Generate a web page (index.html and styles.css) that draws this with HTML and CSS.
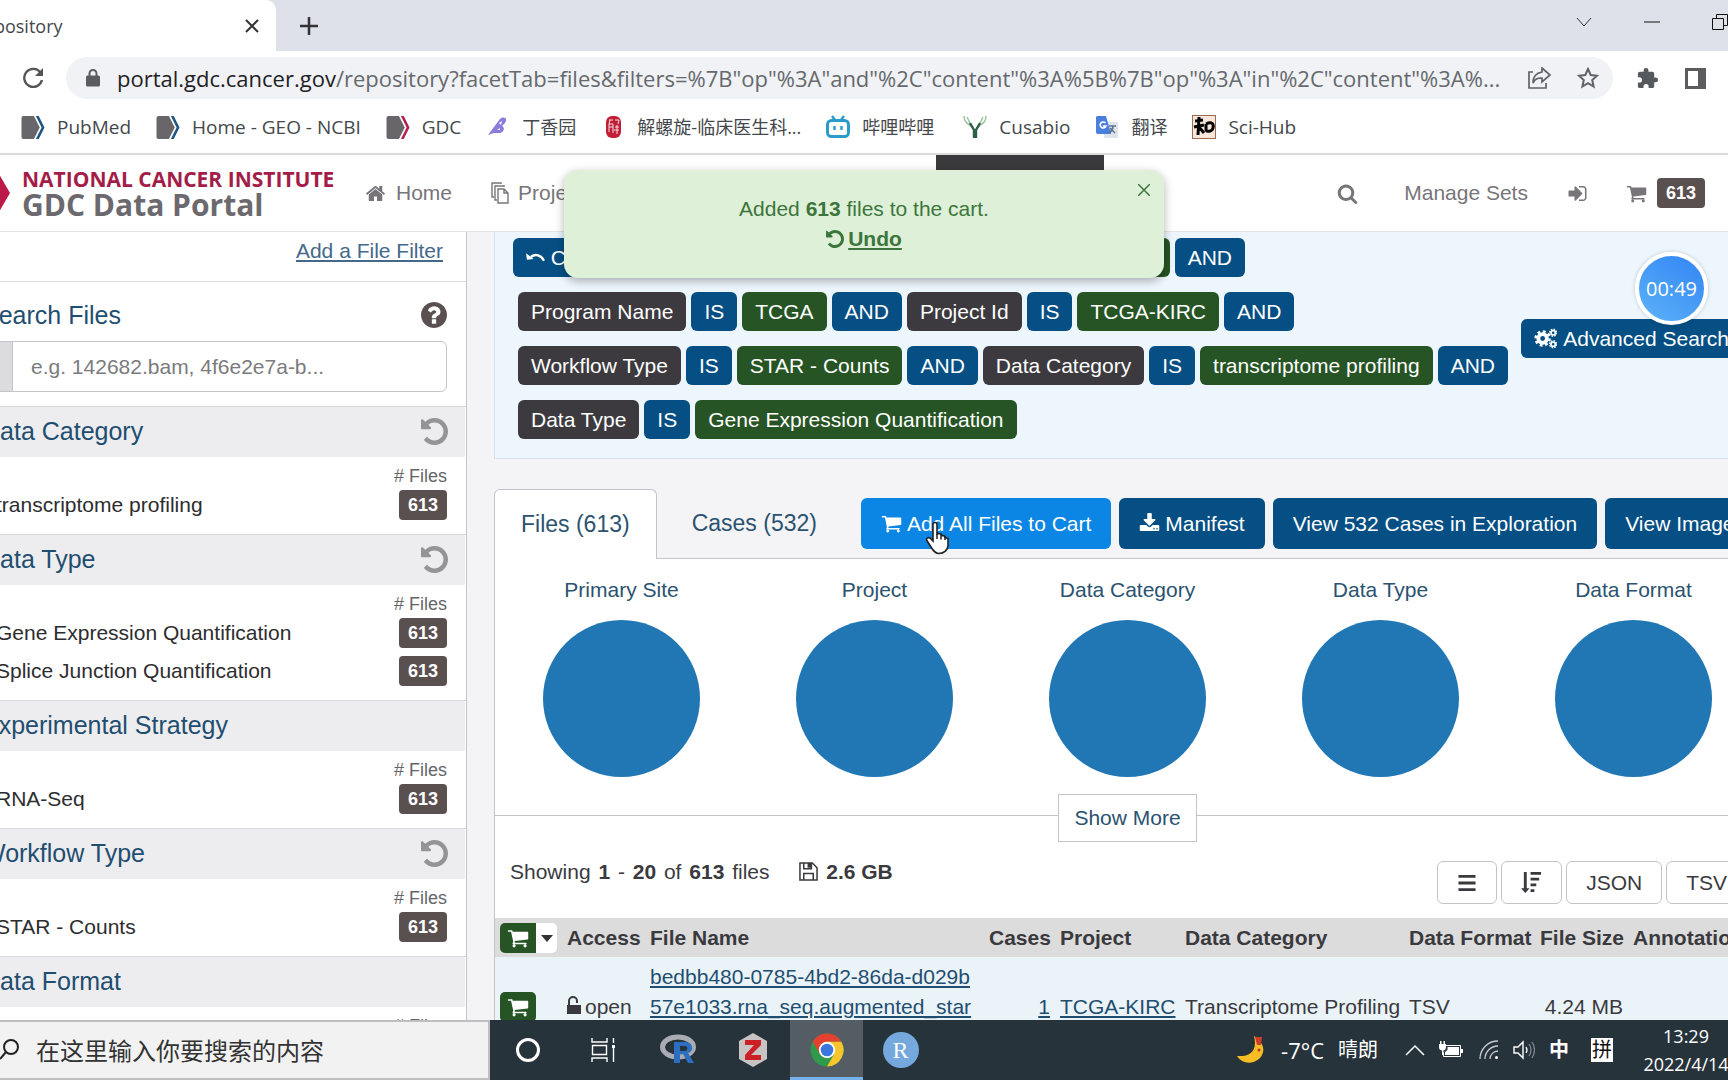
FILE: index.html
```html
<!DOCTYPE html>
<html lang="en">
<head>
<meta charset="utf-8">
<title>Repository</title>
<link rel="stylesheet" href="styles.css">
</head>
<body>
<svg class="sprite" aria-hidden="true">
  <symbol id="i-home" viewBox="0 0 1792 1792"><path d="M1472 992v480q0 26-19 45t-45 19h-384v-384h-256v384h-384q-26 0-45-19t-19-45v-480q0-1 .5-3t.5-3l575-474 575 474q1 2 1 6zm223-69l-62 74q-8 9-21 11h-3q-13 0-21-7l-692-577-692 577q-12 8-24 7-13-2-21-11l-62-74q-8-10-7-23.500t11-21.500l719-599q32-26 76-26t76 26l244 204v-195q0-14 9-23t23-9h192q14 0 23 9t9 23v408l219 182q10 8 11 21.500t-7 23.500z"/></symbol>
  <symbol id="i-cart" viewBox="0 0 1792 1792"><path d="M704 1536q0 52-38 90t-90 38-90-38-38-90 38-90 90-38 90 38 38 90zm896 0q0 52-38 90t-90 38-90-38-38-90 38-90 90-38 90 38 38 90zm128-1088v512q0 24-16.500 42.500t-40.500 21.500l-1044 122q13 60 13 70 0 16-24 64h920q26 0 45 19t19 45-19 45-45 19h-1024q-26 0-45-19t-19-45q0-11 8-31.500t16-36 21.500-40 15.500-29.500l-177-823h-204q-26 0-45-19t-19-45 19-45 45-19h256q16 0 28.500 6.500t19.500 15.500 13 24.500 8 26 5.500 29.500 4.500 26h1201q26 0 45 19t19 45z"/></symbol>
  <symbol id="i-search" viewBox="0 0 1792 1792"><path d="M1216 832q0-185-131.500-316.500t-316.500-131.500-316.500 131.500-131.500 316.500 131.500 316.500 316.500 131.500 316.500-131.500 131.500-316.500zm512 832q0 52-38 90t-90 38q-54 0-90-38l-343-342q-179 124-399 124-143 0-273.500-55.500t-225-150-150-225-55.500-273.500 55.500-273.500 150-225 225-150 273.500-55.500 273.500 55.500 225 150 150 225 55.500 273.500q0 220-124 399l343 343q37 37 37 90z"/></symbol>
  <symbol id="i-help" viewBox="128 128 1536 1536"><path d="M1024 1376v-192q0-14-9-23t-23-9h-192q-14 0-23 9t-9 23v192q0 14 9 23t23 9h192q14 0 23-9t9-23zm256-672q0-88-55.500-163t-138.500-116-170-41q-243 0-371 213-15 24 8 42l132 100q7 6 19 6 16 0 25-12 53-68 86-92 34-24 86-24 48 0 85.500 26t37.500 59q0 38-20 61t-68 45q-63 28-115.500 86.500t-52.500 125.500v36q0 14 9 23t23 9h192q14 0 23-9t9-23q0-19 21.500-49.500t54.500-49.500q32-18 49-28.500t46-35 44.500-48 28-60.500 12.500-81zm384 192q0 209-103 385.500t-279.500 279.500-385.500 103-385.500-103-279.500-279.500-103-385.500 103-385.500 279.500-279.500 385.500-103 385.500 103 279.500 279.500 103 385.500z"/></symbol>
  <symbol id="i-undo" viewBox="128 128 1536 1536"><path d="M1664 896q0 156-61 298t-164 245-245 164-298 61q-172 0-327-72.500t-264-204.500q-7-10-6.500-22.500t8.500-20.500l137-138q10-9 25-9 16 2 23 12 73 95 179 147t225 52q104 0 198.500-40.500t163.500-109.500 109.500-163.500 40.500-198.500-40.500-198.500-109.500-163.500-163.500-109.500-198.500-40.500q-98 0-188 35.500t-160 101.500l137 138q31 30 14 69-17 40-59 40h-448q-26 0-45-19t-19-45v-448q0-42 40-59 39-17 69 14l130 129q107-101 244.500-156.500t284.500-55.500q156 0 298 61t245 164 164 245 61 298z"/></symbol>
  <symbol id="i-signin" viewBox="0 0 1792 1792"><path d="M1312 896q0 26-19 45l-544 544q-19 19-45 19t-45-19-19-45v-288h-448q-26 0-45-19t-19-45v-384q0-26 19-45t45-19h448v-288q0-26 19-45t45-19 45 19l544 544q19 19 19 45zm352-352v704q0 119-84.500 203.500t-203.500 84.500h-320q-13 0-22.500-9.500t-9.500-22.500q0-4-1-20t-.5-26.500 3-23.500 10-19.500 20.500-6.500h320q66 0 113-47t47-113v-704q0-66-47-113t-113-47h-312l-11.500-1-11.500-3-8-5.500-7-9-2-13.500q0-4-1-20t-.5-26.500 3-23.500 10-19.500 20.500-6.500h320q119 0 203.500 84.500t84.500 203.500z"/></symbol>
  <symbol id="i-download" viewBox="0 0 1792 1792"><path d="M1344 1344q0-26-19-45t-45-19-45 19-19 45 19 45 45 19 45-19 19-45zm256 0q0-26-19-45t-45-19-45 19-19 45 19 45 45 19 45-19 19-45zm128-224v320q0 40-28 68t-68 28h-1472q-40 0-68-28t-28-68v-320q0-40 28-68t68-28h465l135 136q58 56 136 56t136-56l136-136h464q40 0 68 28t28 68zm-325-569q17 41-14 70l-448 448q-18 19-45 19t-45-19l-448-448q-31-29-14-70 17-39 59-39h256v-448q0-26 19-45t45-19h256q26 0 45 19t19 45v448h256q42 0 59 39z"/></symbol>
  <symbol id="i-copy" viewBox="0 0 18 22"><path d="M3 15H1V1h9v1M6 18H4V4h9v1M7 7h6l4 4v10H7zM13 7v4h4" fill="none" stroke="currentColor" stroke-width="1.400"/></symbol>
  <symbol id="i-gears" viewBox="0 0 24 24"><circle cx="9" cy="12" r="4.500" fill="none" stroke="currentColor" stroke-width="4"/><circle cx="9" cy="12" r="7.300" fill="none" stroke="currentColor" stroke-width="2.600" stroke-dasharray="3 2.730"/><g fill="none" stroke="currentColor"><circle cx="20" cy="6" r="2.300" stroke-width="1.800"/><circle cx="20" cy="6" r="3.700" stroke-width="1.400" stroke-dasharray="1.600 1.300"/><circle cx="20" cy="18" r="2.300" stroke-width="1.800"/><circle cx="20" cy="18" r="3.700" stroke-width="1.400" stroke-dasharray="1.600 1.300"/></g></symbol>
  <symbol id="i-floppy" viewBox="0 0 20 20"><path d="M1 1h13l5 5v13H1zM5 19v-7h10v7M5 1v6h8V1" fill="none" stroke="currentColor" stroke-width="1.600"/><path d="M9 1h4v5H9z"/></symbol>
  <symbol id="i-list" viewBox="0 0 20 20"><path d="M1 2h18v3H1zM1 9h18v3H1zM1 16h18v3H1z"/></symbol>
  <symbol id="i-sort" viewBox="0 0 22 24"><path d="M3 1h3v17h3l-4.500 5L0 18h3zM10 1h11v3H10zM10 7h9v3h-9zM10 13h6v3h-6zM10 19h4v3h-4z"/></symbol>
  <symbol id="i-unlock" viewBox="0 0 14 20"><path d="M2 10V6a4 4 0 0 1 8 0v2" fill="none" stroke="currentColor" stroke-width="2"/><path d="M0 10h14v9H0z"/></symbol>
  <symbol id="i-clear" viewBox="0 0 20 16"><path d="M5 8c5-4 11-2 14 4" fill="none" stroke="currentColor" stroke-width="2.400"/><path d="M0 4l1 7 7-1z"/></symbol>
  <symbol id="i-ncbi" viewBox="0 0 24 24"><path d="M2 0h11l6 12-6 12H2a2 2 0 0 1-2-2V2a2 2 0 0 1 2-2z" fill="#68666b"/><path d="M15 0h3l6 12-6 12h-3l6-12z" fill="currentColor"/></symbol>
</svg>

<header class="browser">
  <div class="tabs">
    <div class="tab"><span>GDC | Repository</span>
      <button class="plain" aria-label="Close tab"><svg width="14" height="14" viewBox="0 0 14 14"><path d="M1 1l12 12M13 1L1 13" stroke="#333" stroke-width="2"/></svg></button>
    </div>
    <button class="plain newtab" aria-label="New tab"><svg width="18" height="18" viewBox="0 0 18 18"><path d="M9 0v18M0 9h18" stroke="#333" stroke-width="2.500"/></svg></button>
    <div class="window-buttons">
      <button class="plain" aria-label="Search tabs"><svg width="16" height="16" viewBox="0 0 16 16"><path d="M1 4l7 8 7-8" stroke="#333" fill="none"/></svg></button>
      <button class="plain" aria-label="Minimize"><svg width="16" height="16" viewBox="0 0 16 16"><path d="M0 8h16" stroke="#111"/></svg></button>
      <button class="plain" aria-label="Restore"><svg width="16" height="16" viewBox="0 0 16 16"><path d="M.5 4.500h11v11H.5zM4.500 4V.5h11v11H12" stroke="#111" fill="none"/></svg></button>
    </div>
  </div>
  <div class="toolbar">
    <button class="plain" aria-label="Reload"><svg width="22" height="22" viewBox="0 0 22 22"><path d="M18.500 5.500A9 9 0 1 0 20 13" fill="none" stroke="#555" stroke-width="2.400"/><path d="M21 1v8h-8z" fill="#555"/></svg></button>
    <div class="omnibox">
      <svg width="14" height="18" viewBox="0 0 14 18"><path d="M3.500 8V4.500a3.500 3.500 0 0 1 7 0V8" fill="none" stroke="#5a5c60" stroke-width="2"/><rect y="6.500" width="14" height="11" rx="1.500" fill="#5a5c60"/></svg>
      <div class="url"><b>portal.gdc.cancer.gov</b>/repository?facetTab=files&amp;filters=%7B"op"%3A"and"%2C"content"%3A%5B%7B"op"%3A"in"%2C"content"%3A%...</div>
      <svg class="share" width="24" height="22" viewBox="0 0 24 22"><path d="M5 5H1v16h17v-5M14 1l8 7-8 7v-4c-5 0-7 1-9 5 0-7 3-10 9-11z" fill="none" stroke="#5f6368" stroke-width="1.700"/></svg>
      <svg width="22" height="22" viewBox="0 0 22 22"><path d="M11 2l2.700 6 6.300.7-4.800 4.300 1.400 6.500L11 16.200 5.400 19.500 6.800 13 2 8.700 8.300 8z" fill="none" stroke="#5f6368" stroke-width="2"/></svg>
    </div>
    <svg width="23" height="23" viewBox="0 0 24 24"><path d="M20.500 11H19V7a2 2 0 0 0-2-2h-4V3.500a2.500 2.500 0 0 0-5 0V5H4a2 2 0 0 0-2 2v3.800h1.500a2.700 2.700 0 0 1 0 5.400H2V20a2 2 0 0 0 2 2h3.800v-1.500a2.700 2.700 0 0 1 5.400 0V22H17a2 2 0 0 0 2-2v-4h1.500a2.500 2.500 0 0 0 0-5z" fill="#55585d"/></svg>
    <svg class="panel-icon" width="21" height="21" viewBox="0 0 21 21"><path d="M1.500 1.500h18v18h-18z" fill="#fff" stroke="#5a5c60" stroke-width="3"/><path d="M13 1h7v19h-7z" fill="#5a5c60"/></svg>
  </div>
  <nav class="bookmarks" aria-label="Bookmarks">
    <a href="#"><svg class="blue" width="24" height="23"><use href="#i-ncbi"/></svg>PubMed</a>
    <a href="#"><svg class="blue" width="24" height="23"><use href="#i-ncbi"/></svg>Home - GEO - NCBI</a>
    <a href="#"><svg class="red" width="24" height="23"><use href="#i-ncbi"/></svg>GDC</a>
    <a href="#" class="cjk"><svg width="24" height="20" viewBox="0 0 24 20"><path d="M2 18L14 2c4-3 8-1 5 4l-3 3c4 2 1 7-3 7H8z" fill="#8a7bdc"/><path d="M13 6l3-2-1 4zM11 13l3-2v2z" fill="#fff"/></svg>丁香园</a>
    <a href="#" class="cjk"><svg width="24" height="24" viewBox="0 0 24 24"><rect x="5" y="1" width="15" height="22" rx="6" fill="#c01f36"/><path d="M8 5h4M9 5l-1 4h4v9M8 12h4M8 9v8M14 5h4l-1 4M14 12h4M16 10v9M13 15h5" stroke="#f7dcdf" fill="none"/></svg>解螺旋-临床医生科...</a>
    <a href="#" class="cjk"><svg width="24" height="24" viewBox="0 0 24 24"><rect x="1.500" y="5.500" width="21" height="16" rx="4" fill="#fff" stroke="#2a9cc9" stroke-width="3"/><path d="M6 1l3 4M18 1l-3 4M8.500 11v4M15.500 11v4" stroke="#2a9cc9" stroke-width="2.400"/></svg>哔哩哔哩</a>
    <a href="#" class="cusabio"><svg width="24" height="24" viewBox="0 0 24 24"><path d="M1 1c0 6 3 7 8 11M23 1c0 6-3 7-8 11M4 2l3 6M20 2l-3 6" stroke="#9cc5a0" stroke-width="1.500" fill="none"/><path d="M7 8l4 7v8M17 8l-4 7v8" stroke="#2c5f45" stroke-width="2.400" fill="none"/></svg>Cusabio</a>
    <a href="#" class="cjk"><svg width="24" height="24" viewBox="0 0 24 24"><rect x="9" y="7" width="14" height="16" rx="1" fill="#dfe3ea"/><path d="M2 1h9l5 18H3a2 2 0 0 1-2-2V2z" fill="#4a7fdf"/><path d="M10.500 8a3 3 0 1 0 .5 3H8" fill="none" stroke="#fff" stroke-width="1.600"/><path d="M14 11h7M18 11c0 4-2 6-4 7M15 13l5 5" stroke="#5c7396" stroke-width="1.500"/></svg>翻译</a>
    <a href="#"><svg width="24" height="24" viewBox="0 0 24 24"><rect x=".5" y=".5" width="23" height="23" fill="#f8e8dc" stroke="#9b6b52"/><path d="M3 6l8-1M7 2L6 20M2 12l10-2M7 12l5 6M14 9c6-3 8 0 7 4s-6 4-7 2V9" stroke="#000" stroke-width="3" fill="none"/></svg>Sci-Hub</a>
  </nav>
</header>

<div class="portal">
  <header class="topnav">
    <a href="#" class="brand">
      <svg width="34" height="52" viewBox="0 0 34 52"><path d="M10 0h9l15 26-15 26h-9l13-26z" fill="#bb1a48"/></svg>
      <span class="brand-text"><span class="nci">NATIONAL CANCER INSTITUTE</span><span class="gdc">GDC Data Portal</span></span>
    </a>
    <a href="#" class="nav-link home"><svg width="21" height="21"><use href="#i-home"/></svg>Home</a>
    <a href="#" class="nav-link projects"><svg width="18" height="22"><use href="#i-copy"/></svg>Projects</a>
    <a href="#" class="nav-link active" aria-label="Repository"></a>
    <div class="nav-right">
      <a href="#" class="nav-link" aria-label="Search"><svg width="21" height="21"><use href="#i-search"/></svg></a>
      <a href="#" class="nav-link sets">Manage Sets</a>
      <a href="#" class="nav-link" aria-label="Login"><svg width="21" height="21"><use href="#i-signin"/></svg></a>
      <a href="#" class="nav-link cart-link"><svg width="21" height="21"><use href="#i-cart"/></svg><span class="badge">613</span></a>
    </div>
  </header>

  <div class="columns">
    <aside class="sidebar">
      <div class="add-filter"><a href="#">Add a File Filter</a></div>
      <section class="search-files">
        <div class="facet-title"><label for="file-search">Search Files</label><svg class="help" width="26" height="26"><use href="#i-help"/></svg></div>
        <div class="input-group"><span class="addon"></span><input id="file-search" type="text" placeholder="e.g. 142682.bam, 4f6e2e7a-b..."></div>
      </section>
      <section class="facet">
        <h3 class="facet-title shaded">Data Category<button class="plain" aria-label="Reset Data Category"><svg width="27" height="27"><use href="#i-undo"/></svg></button></h3>
        <div class="count-head"># Files</div>
        <label class="facet-row"><input type="checkbox"><span>transcriptome profiling</span><span class="badge">613</span></label>
      </section>
      <section class="facet">
        <h3 class="facet-title shaded">Data Type<button class="plain" aria-label="Reset Data Type"><svg width="27" height="27"><use href="#i-undo"/></svg></button></h3>
        <div class="count-head"># Files</div>
        <label class="facet-row"><input type="checkbox"><span>Gene Expression Quantification</span><span class="badge">613</span></label>
        <label class="facet-row"><input type="checkbox"><span>Splice Junction Quantification</span><span class="badge">613</span></label>
      </section>
      <section class="facet">
        <h3 class="facet-title shaded">Experimental Strategy</h3>
        <div class="count-head"># Files</div>
        <label class="facet-row"><input type="checkbox"><span>RNA-Seq</span><span class="badge">613</span></label>
      </section>
      <section class="facet">
        <h3 class="facet-title shaded">Workflow Type<button class="plain" aria-label="Reset Workflow Type"><svg width="27" height="27"><use href="#i-undo"/></svg></button></h3>
        <div class="count-head"># Files</div>
        <label class="facet-row"><input type="checkbox"><span>STAR - Counts</span><span class="badge">613</span></label>
      </section>
      <section class="facet">
        <h3 class="facet-title shaded">Data Format</h3>
        <div class="count-head"># Files</div>
      </section>
    </aside>

    <main class="content">
      <section class="query">
        <div class="filters">
          <div class="filter-row first"><button class="pill op"><svg width="19" height="16"><use href="#i-clear"/></svg> Clear</button><span class="pill field">Primary Site</span><span class="pill op">IS</span><button class="pill value grow">kidney</button><button class="pill op">AND</button></div>
          <div class="filter-row"><span class="pill field">Program Name</span><span class="pill op">IS</span><button class="pill value">TCGA</button><button class="pill op">AND</button><span class="pill field">Project Id</span><span class="pill op">IS</span><button class="pill value">TCGA-KIRC</button><button class="pill op">AND</button></div>
          <div class="filter-row"><span class="pill field">Workflow Type</span><span class="pill op">IS</span><button class="pill value">STAR - Counts</button><button class="pill op">AND</button><span class="pill field">Data Category</span><span class="pill op">IS</span><button class="pill value">transcriptome profiling</button><button class="pill op">AND</button></div>
          <div class="filter-row"><span class="pill field">Data Type</span><span class="pill op">IS</span><button class="pill value">Gene Expression Quantification</button></div>
        </div>
        <button class="pill op advanced"><svg width="23" height="23"><use href="#i-gears"/></svg>Advanced Search</button>
      </section>

      <div class="result-tabs">
        <button class="result-tab selected">Files (613)</button>
        <button class="result-tab">Cases (532)</button>
        <div class="actions">
          <button class="action bright"><svg width="21" height="21"><use href="#i-cart"/></svg>Add All Files to Cart</button>
          <button class="action"><svg width="21" height="21"><use href="#i-download"/></svg>Manifest</button>
          <button class="action">View 532 Cases in Exploration</button>
          <button class="action">View Images</button>
        </div>
      </div>

      <section class="results">
        <div class="pies">
          <figure><figcaption>Primary Site</figcaption><div class="pie"></div></figure>
          <figure><figcaption>Project</figcaption><div class="pie"></div></figure>
          <figure><figcaption>Data Category</figcaption><div class="pie"></div></figure>
          <figure><figcaption>Data Type</figcaption><div class="pie"></div></figure>
          <figure><figcaption>Data Format</figcaption><div class="pie"></div></figure>
        </div>
        <div class="more"><button>Show More</button></div>
        <div class="summary">
          <p>Showing <b>1</b> - <b>20</b> of <b>613</b> files <svg width="19" height="19"><use href="#i-floppy"/></svg> <b>2.6 GB</b></p>
          <div class="tools">
            <button aria-label="Columns"><svg width="20" height="19"><use href="#i-list"/></svg></button>
            <button aria-label="Sort"><svg width="21" height="23"><use href="#i-sort"/></svg></button>
            <button>JSON</button>
            <button>TSV</button>
          </div>
        </div>
        <table>
          <colgroup><col class="c-cart"><col class="c-access"><col><col class="c-cases"><col class="c-project"><col class="c-category"><col class="c-format"><col class="c-size"><col class="c-notes"></colgroup>
          <thead><tr><th><div class="cart-split"><button class="cart-button" aria-label="Add all to cart"><svg width="22" height="22"><use href="#i-cart"/></svg></button><button class="caret" aria-label="More"><svg width="12" height="8" viewBox="0 0 12 8"><path d="M0 0h12L6 7z" fill="#333"/></svg></button></div></th><th>Access</th><th>File Name</th><th class="num">Cases</th><th>Project</th><th>Data Category</th><th>Data Format</th><th class="num">File Size</th><th>Annotations</th></tr></thead>
          <tbody><tr><td><button class="cart-button" aria-label="Add to cart"><svg width="22" height="22"><use href="#i-cart"/></svg></button></td><td><svg class="lock" width="14" height="20"><use href="#i-unlock"/></svg>open</td><td><a href="#">bedbb480-0785-4bd2-86da-d029b<br>57e1033.rna_seq.augmented_star<br>_gene_counts.tsv</a></td><td class="num"><a href="#">1</a></td><td><a href="#">TCGA-KIRC</a></td><td>Transcriptome Profiling</td><td>TSV</td><td class="num">4.24 MB</td><td></td></tr></tbody>
        </table>
      </section>
    </main>
  </div>
</div>

<footer class="taskbar">
  <div class="os-search"><svg width="20" height="22" viewBox="0 0 20 22"><circle cx="11" cy="8" r="7" fill="none" stroke="#222" stroke-width="2"/><path d="M6 13l-6 7" stroke="#222" stroke-width="2"/></svg><input type="text" aria-label="Search" placeholder="在这里输入你要搜索的内容"></div>
  <button class="app" aria-label="Cortana"><svg width="26" height="26" viewBox="0 0 26 26"><circle cx="13" cy="13" r="10.500" fill="none" stroke="#fff" stroke-width="3"/></svg></button>
  <button class="app" aria-label="Task view"><svg width="26" height="26" viewBox="0 0 26 26"><path d="M2 1v4h15V1M2 25v-4h15v4M2.500 8.500h14v9h-14zM23.500 1v5M23.500 11v14" fill="none" stroke="#fff" stroke-width="1.400"/><path d="M22 8h3v3h-3z" fill="#fff"/></svg></button>
  <button class="app" aria-label="R"><svg width="38" height="32" viewBox="0 0 38 32"><ellipse cx="19" cy="13" rx="15.500" ry="10" fill="none" stroke="#a9adb3" stroke-width="5"/><path d="M15 8h11c9 0 9 10 3 11l6 10h-6l-5-9h-3v9h-6zM21 12v5h5c3 0 3-5 0-5z" fill="#2c6fc0" fill-rule="evenodd"/></svg></button>
  <button class="app" aria-label="Zotero"><svg width="32" height="34" viewBox="0 0 32 34"><path d="M16 0l14 8v18l-14 8-14-8V8z" fill="#c9c4c4"/><path d="M8 7h16v5L14 22h10v5H8v-5l9-10H8z" fill="#cc2027"/></svg></button>
  <button class="app current" aria-label="Chrome"><svg width="34" height="34" viewBox="0 0 34 34"><circle cx="17" cy="17" r="16.500" fill="#2f9a4b"/><path d="M2.700 8.700A16.500 16.500 0 0 1 31.300 8.700H17L9.800 21z" fill="#e3402f"/><path d="M31.300 8.700A16.500 16.500 0 0 1 17 33.500L24.200 21 17 8.700z" fill="#f7c52c"/><circle cx="17" cy="17" r="8.200" fill="#fff"/><circle cx="17" cy="17" r="6.300" fill="#3a78e0"/></svg></button>
  <button class="app rstudio" aria-label="RStudio"><span>R</span></button>
  <div class="tray">
    <svg width="30" height="30" viewBox="0 0 30 30"><path d="M18 1c8 5 13 14 6 22-7 7-18 6-23-2 12 1 21-4 17-20z" fill="#f6bd24"/><path d="M19 2h7l-1 8h-4z" fill="#d33a2c"/><circle cx="23" cy="15" r="1.500" fill="#b33"/></svg>
    <span class="weather">-7°C</span><span class="sky">晴朗</span>
    <svg class="up" width="20" height="12" viewBox="0 0 20 12"><path d="M1 11l9-9 9 9" fill="none" stroke="#fff" stroke-width="1.500"/></svg>
    <svg class="battery" width="26" height="18" viewBox="0 0 26 18"><path d="M8 4.500h14.500v11h-17v-4" fill="none" stroke="#fff"/><path d="M9.500 6H21v8H7v-3l2.500-2zM23 8h2v4h-2zM1 3h7v3a3.500 3.500 0 0 1-7 0zM2 0h1.500v3H2zM5.500 0H7v3H5.500zM4 9h1.500v5H4z" fill="#fff"/></svg>
    <svg class="wifi" width="20" height="20" viewBox="0 0 20 20"><path d="M1 19A18 18 0 0 1 19 1M6 19A13 13 0 0 1 19 6M11 19a8 8 0 0 1 8-8" fill="none" stroke="#c9cdd0" stroke-width="1.300"/><circle cx="17.500" cy="17.500" r="1.500" fill="#fff"/></svg>
    <svg class="sound" width="22" height="20" viewBox="0 0 22 20"><path d="M1 7h4l5-5v16l-5-5H1z" fill="none" stroke="#fff" stroke-width="1.400"/><path d="M13 7q2 3 0 6" fill="none" stroke="#fff" stroke-width="1.300"/><path d="M16 4q4 6 0 12M19 2q5 8 0 16" fill="none" stroke="#7b858b" stroke-width="1.300"/></svg>
    <span class="ime">中</span><span class="pinyin">拼</span>
    <div class="clock"><span>13:29</span><span>2022/4/14</span></div>
  </div>
</footer>

<div class="toast" role="status">
  <button class="plain toast-close" aria-label="Close"><svg width="12" height="12" viewBox="0 0 12 12"><path d="M0 0l12 12M12 0L0 12" stroke="#3c763d" stroke-width="1.500"/></svg></button>
  <p>Added <b>613</b> files to the cart.</p>
  <p class="undo"><svg width="18" height="18"><use href="#i-undo"/></svg><a href="#">Undo</a></p>
</div>
<div class="timer">00:49</div>
<svg class="pointer" width="26" height="34" viewBox="0 0 26 34"><path d="M8 18V3.500a2 2 0 0 1 4 0V13l1-.5 3 .5 1 1.500 2.500.5 1 1.500 2.500 1V24c0 5-4 8.500-9 8.500-4 0-6-3-8-6.500L1.500 19c0-2.500 2.500-3 4-1.500L8 20z" fill="#fff" stroke="#222" stroke-width="1.600"/><path d="M12 13v5M16 13.500v5M20 15v4" stroke="#222" stroke-width="1.500"/></svg>
</body>
</html>
```

FILE: styles.css
```css
* { box-sizing: border-box; }
html, body { margin: 0; height: 100%; overflow: hidden; }
body {
  display: flex;
  flex-direction: column;
  font: 21px/30px "Liberation Sans", Arial, sans-serif;
  color: #3a3a3e;
  background: #f4f4f6;
}
button, input { font: inherit; color: inherit; margin: 0; }
button { cursor: pointer; }
p, h3, figure { margin: 0; }
svg { flex: none; fill: currentColor; }
.sprite { display: none; }
.plain { display: flex; border: 0; padding: 0; background: none; }

/* browser window */
.browser { flex: none; background: #fff; color: #44474b; font-family: "Open Sans", "Noto Sans CJK SC", sans-serif; border-bottom: 2px solid #dadadb; }
.tabs { display: flex; align-items: center; height: 51px; background: #dee1e9; }
.tab { display: flex; align-items: center; justify-content: space-between; width: 396px; height: 51px; margin-left: -120px; padding: 0 17px 0 36px; border-radius: 0 10px 0 0; background: #fff; font-size: 18px; white-space: nowrap; }
.newtab { margin-left: 24px; }
.window-buttons { display: flex; gap: 52px; margin: 0 0 8px auto; }
.toolbar { display: flex; align-items: center; height: 54px; padding-left: 22px; }
.omnibox { display: flex; flex: 1; align-items: center; min-width: 0; height: 42px; margin: 0 23px 0 22px; padding: 0 14px 0 20px; border-radius: 21px; background: #f0f2f5; color: #66696d; font-size: 22px; }
.url { flex: 1; min-width: 0; margin-left: 17px; overflow: hidden; white-space: nowrap; }
.url b { color: #1f2124; font-weight: normal; }
.share { margin-right: 25px; }
.panel-icon { margin: 0 22px 0 26px; }
.bookmarks { display: flex; align-items: center; gap: 25px; height: 48px; padding: 0 0 4px 21px; font-size: 19px; white-space: nowrap; }
.bookmarks a { display: flex; align-items: center; gap: 12px; color: inherit; text-decoration: none; }
.bookmarks .cjk { font-size: 18px; }
.bookmarks .blue { color: #1f5583; }
.bookmarks .red { color: #b5234d; }
.bookmarks .cusabio { margin-left: 4px; }

/* portal */
.portal { display: flex; flex: 1; flex-direction: column; min-height: 0; overflow: hidden; }
.topnav { display: flex; flex: none; align-items: center; height: 77px; padding-right: 23px; border-bottom: 1px solid #e4e4e6; background: #fff; }
.brand { display: flex; align-items: center; gap: 12px; width: 332px; margin-left: -24px; text-decoration: none; white-space: nowrap; }
.brand-text { display: flex; flex-direction: column; font-family: "Open Sans", sans-serif; font-weight: bold; }
.nci { color: #a31d48; font-size: 21px; line-height: 24px; }
.gdc { color: #6b696e; font-size: 30px; line-height: 28px; }
.nav-link { display: flex; align-items: center; color: #77757a; text-decoration: none; }
.home { gap: 10px; margin-left: 57px; }
.projects { gap: 9px; margin-left: 39px; }
.active { align-self: stretch; width: 168px; margin-left: 342px; background: #3a3a3c; }
.nav-right { display: flex; align-items: center; margin-left: auto; }
.sets { margin: 0 39px 0 46px; }
.cart-link { gap: 10px; margin-left: 38px; }
.badge { min-width: 48px; padding: 0 9px; border-radius: 4px; background: #5a5050; color: #fff; font-size: 18px; font-weight: bold; line-height: 30px; text-align: center; }
.columns { display: flex; flex: 1; min-height: 0; }

/* facets */
.sidebar { flex: none; width: 505px; margin-left: -38px; border-right: 1px solid #c4c4c8; background: #fff; }
.add-filter { padding: 4px 23px 15px; border-bottom: 1px solid #dedee0; text-align: right; }
.add-filter a { color: #44698c; }
.facet-title { display: flex; align-items: center; justify-content: space-between; height: 50px; margin: 0; padding: 0 19px 2px 20px; color: #1f4e70; font-size: 25px; font-weight: normal; }
.search-files { padding: 9px 0 14px; }
.help { color: #5a5050; }
.input-group { display: flex; height: 51px; margin: 0 19px 0 20px; }
.addon { width: 31px; border: 1px solid #c4c4c8; border-radius: 6px 0 0 6px; background: #dcdcde; }
.input-group input { flex: 1; min-width: 0; margin-left: -1px; padding: 0 18px; border: 1px solid #c4c4c8; border-radius: 0 6px 6px 0; background: #fff; }
.input-group input::placeholder { color: #7b7b7d; }
.facet { padding-bottom: 14px; border-top: 1px solid #d8d8da; }
.shaded { margin-right: 1px; padding-right: 17px; background: #ededef; }
.shaded .plain { color: #949496; }
.count-head { padding: 6px 19px 0; color: #66666a; font-size: 18px; line-height: 27px; text-align: right; }
.facet-row { display: flex; align-items: center; padding: 0 19px 0 16px; color: #2d2d2f; }
.facet-row + .facet-row { margin-top: 8px; }
.facet-row input { width: 13px; height: 13px; margin-right: 5px; }
.facet-row .badge { margin-left: auto; }

/* query */
.content { flex: 1; min-width: 0; margin: 0 -33px 0 27px; }
.query { display: flex; align-items: flex-start; justify-content: space-between; height: 227px; border: 1px solid #d5e3ee; border-top: 0; background: #edf6fd; white-space: nowrap; }
.filters { display: flex; flex-direction: column; gap: 15px; padding: 6px 0 0 23px; }
.filter-row { display: flex; gap: 5px; }
.first { width: 732px; margin-left: -5px; }
.pill { padding: 0 13px; border: 0; border-radius: 6px; color: #fff; line-height: 39px; }
.field { background: #3c3a3e; }
.op { background: #054f84; }
.value { background: #265424; }
.grow { flex: 1; }
.advanced { display: flex; align-items: center; gap: 6px; margin: 87px 18px 0 0; }

/* results */
.result-tabs { display: flex; margin-top: 30px; white-space: nowrap; }
.result-tab { padding: 0 34px; border: 1px solid transparent; border-radius: 6px 6px 0 0; background: none; color: #2b5270; font-size: 23px; line-height: 67px; }
.selected { z-index: 1; margin-bottom: -1px; padding: 0 26px; border-color: #c4c4c8; border-bottom: 0; background: #fff; }
.actions { display: flex; align-items: flex-start; gap: 8px; margin: 9px 0 0 9px; }
.action { display: flex; align-items: center; gap: 5px; height: 51px; padding: 0 20px; border: 0; border-radius: 6px; background: #054f84; color: #fff; }
.bright { background: #0b86e4; }
.results { border: 1px solid #c4c4c8; background: #fff; }
.pies { display: grid; grid-template-columns: repeat(5, 1fr); padding: 16px 0 17px; color: #2b5270; text-align: center; }
.pie { width: 157px; height: 157px; margin: 15px auto 0; border-radius: 50%; background: #2077b4; }
.more { display: flex; align-items: center; justify-content: center; color: #c4c4c8; }
.more::before, .more::after { content: ""; flex: 1; height: 1px; margin-bottom: 5px; background: currentColor; }
.more button { height: 48px; padding: 0 15px; border: 1px solid #c4c4c8; background: #fff; color: #2b5270; }
.summary { display: flex; justify-content: space-between; padding: 15px 13px 14px 15px; }
.summary b { margin: 0 2px; }
.summary p svg { margin: 0 0 0 24px; vertical-align: -2px; }
.tools { display: flex; gap: 4px; padding-top: 4px; }
.tools button { display: flex; align-items: center; height: 43px; padding: 0 19px; border: 1px solid #c4c4c8; border-radius: 6px; background: #fff; }
table { width: 100%; table-layout: fixed; border-collapse: collapse; white-space: nowrap; }
th, td { padding: 5px; text-align: left; }
th { height: 39px; padding: 4px 5px; background: #dcdcdd; }
td { background: #eaf3f8; }
th.num, td.num { text-align: right; }
td a { color: #1f4e70; }
.c-cart { width: 67px; }
.c-access { width: 83px; }
.c-cases { width: 71px; }
.c-project { width: 125px; }
.c-category { width: 224px; }
.c-format { width: 131px; }
.c-size { width: 93px; }
.c-notes { width: 132px; }
.cart-split { display: flex; }
.cart-button { display: flex; align-items: center; justify-content: center; width: 36px; height: 30px; padding: 0; border: 0; border-radius: 5px; background: #265424; color: #fff; }
.cart-split .cart-button { border-radius: 5px 0 0 5px; }
.caret { display: flex; align-items: center; width: 21px; height: 30px; padding: 2px 4px 0 5px; border: 0; border-radius: 0 5px 5px 0; background: #fff; }
.lock { margin-right: 4px; vertical-align: -1px; }

/* taskbar */
.taskbar { display: flex; flex: none; height: 60px; background: #27333b; color: #fff; font-family: "Open Sans", "Noto Sans CJK SC", sans-serif; }
.os-search { display: flex; align-items: center; gap: 16px; width: 490px; border: 2px solid #bfbfc1; border-left: 0; background: #f2f2f2; color: #333; }
.os-search input { flex: 1; min-width: 0; padding: 2px 0 0; border: 0; background: none; font-size: 24px; }
.os-search input::placeholder { color: #333; }
.app { display: flex; align-items: center; justify-content: center; width: 75px; padding: 0; border: 0; background: none; }
.current { width: 73px; border-bottom: 3px solid #76b2ee; border-top: 3px solid transparent; background: #535d63; }
.rstudio span { width: 36px; height: 36px; border-radius: 50%; background: #75a8dc; color: #fff; font: 24px/36px "Liberation Serif", serif; }
.tray { display: flex; align-items: center; margin-left: auto; font-size: 20px; white-space: nowrap; }
.weather { margin-left: 15px; font-size: 22px; }
.sky { margin-left: 14px; }
.up { margin-left: 27px; }
.battery { margin-left: 13px; }
.wifi { margin-left: 15px; }
.sound { margin-left: 14px; }
.ime { margin-left: 14px; font-weight: bold; }
.pinyin { margin-left: 22px; padding: 0 1px; background: #fff; color: #111; line-height: 24px; }
.clock { display: flex; flex-direction: column; align-items: center; width: 92px; margin: 0 -4px 0 27px; font-size: 18px; line-height: 28px; }

/* overlays */
.toast { position: absolute; top: 170px; left: 50%; width: 600px; height: 108px; margin-left: -300px; padding: 24px 0 0; border-radius: 14px; background: #dff0d8; color: #3c763d; text-align: center; box-shadow: 0 3px 10px rgba(0, 0, 0, .3); }
.toast-close { position: absolute; top: 14px; right: 14px; }
.undo { display: flex; align-items: center; justify-content: center; gap: 4px; font-weight: bold; }
.undo a { color: inherit; }
.timer { position: absolute; top: 252px; right: 20px; width: 73px; height: 73px; border: 4px solid #fff; border-radius: 50%; background: linear-gradient(215deg, #3284f4, #5cb3f8); color: #fff; font: 20px/65px "Open Sans", sans-serif; text-align: center; box-shadow: 0 0 4px rgba(0, 0, 0, .2); }
.pointer { position: absolute; top: 521px; left: 925px; }
```
